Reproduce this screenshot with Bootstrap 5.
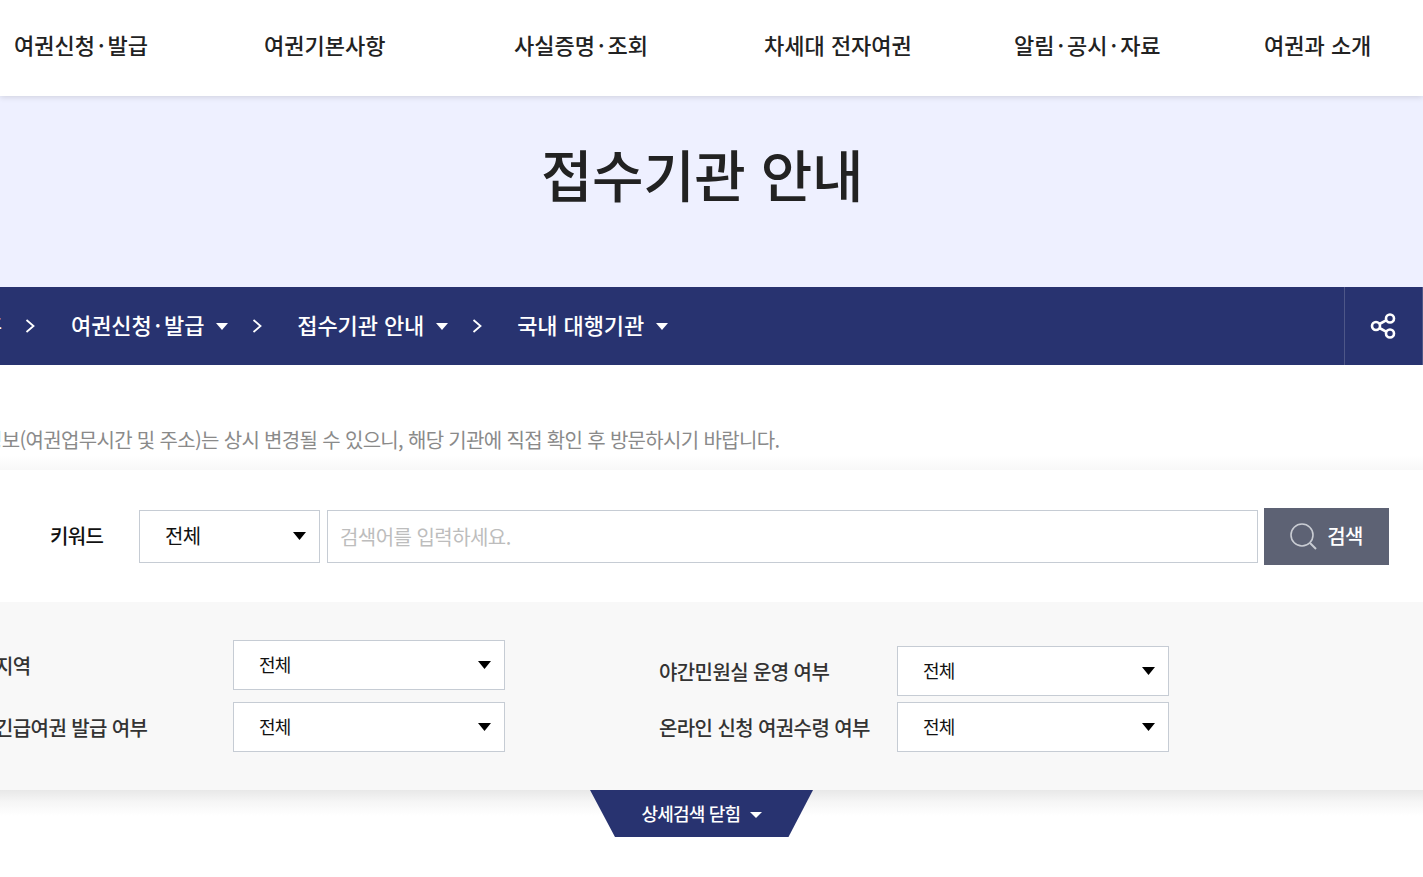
<!DOCTYPE html>
<html lang="ko">
<head>
<meta charset="utf-8">
<title>접수기관 안내</title>
<link href="https://cdn.jsdelivr.net/npm/bootstrap@5.3.0/dist/css/bootstrap.min.css" rel="stylesheet">
<style>
html,body{height:100%;overflow:hidden}
body{font-family:"Noto Sans CJK KR","Noto Sans",sans-serif;background:#fff;color:#222;width:1423px}
.top-nav{height:96px;background:#fff;box-shadow:0 1px 6px rgba(0,0,0,.14);position:relative;z-index:2;padding-left:14px}
.top-link{flex:none;width:250px;font-size:22px;font-weight:500;color:#222;text-decoration:none;white-space:nowrap;line-height:96px;margin-top:-9px}
.mid-dot{padding:0 3px}
.hero{height:191px;background:#eef0ff;padding:41px 19px 0 0}
.hero-title{font-size:56px;font-weight:500;letter-spacing:-.4px;line-height:72px;margin:0;color:#222;text-align:center}
.crumbs{height:78px;background:#283370;color:#fff}
.crumb-home{font-size:21px;font-weight:500;width:2px;overflow:hidden;white-space:nowrap;direction:rtl}
.crumb-link{color:#fff;text-decoration:none;font-size:22px;font-weight:500;letter-spacing:-.1px;white-space:nowrap;margin-left:34px;margin-top:-3px}
.crumb-link-first{margin-left:35px}
.crumb-caret{width:0;height:0;border-left:6.5px solid transparent;border-right:6.5px solid transparent;border-top:7px solid #fff;display:inline-block}
.chev-first{margin-left:23px}
.chev-next{margin-left:24px}
.share-box{width:79px;height:78px;padding-right:2px;border-left:1px solid #4e5788;border-right:1px solid #4e5788;margin-left:auto}
.notice-wrap{height:105px;padding-top:60px;background:linear-gradient(to bottom,#fff 0,#fff 91px,#f8f8f8 100%);overflow:hidden}
.notice{font-size:20px;color:#8a8a8a;letter-spacing:-.67px;line-height:30px;margin:0 0 0 -16px;white-space:nowrap}
.kw-row{height:132px;background:#fff}
.kw-label{width:139px;padding-left:50px;font-size:20px;font-weight:500;letter-spacing:-.6px;color:#111}
.sel{appearance:none;-webkit-appearance:none;background:#fff url("data:image/svg+xml,%3Csvg xmlns='http://www.w3.org/2000/svg' width='13' height='8'%3E%3Cpath d='M0 0h13L6.5 8z' fill='%23000'/%3E%3C/svg%3E") no-repeat right 13px center;border:1px solid #c6ccd4;border-radius:0;color:#111;font-family:inherit;padding:0 0 2px 25px;outline:0}
.sel-kw{width:181px;height:53px;font-size:20px;letter-spacing:-.6px;padding-bottom:0}
.kw-input{width:931px;height:53px;margin-left:7px;border:1px solid #c6ccd4;border-radius:0;padding:0 12px;font-size:20px;letter-spacing:-.55px;font-family:inherit;outline:0}
.kw-input::placeholder{color:#bdbdbd;opacity:1}
.kw-btn{width:125px;height:57px;margin-left:6px;background:#5d6274;color:#fff;border:0;border-radius:0;font-size:20px;font-weight:500;letter-spacing:-.6px;gap:10px}
.detail{height:188px;background:#f8f8f8}
.d-col{height:100%}
.d-left{width:664px;padding-top:38px;margin-left:-5px;flex:none}
.d-right{padding-top:44px;flex:none}
.d-label{font-size:20px;font-weight:500;letter-spacing:-.6px;color:#333;white-space:nowrap;width:238px;margin-top:1px}
.sel-d{width:272px;height:50px;font-size:18px;letter-spacing:-.9px}
.d-gap-1{margin-bottom:12px}
.d-gap-2{margin-bottom:6px}
.tab-wrap{height:47px;background:linear-gradient(to bottom,#e8e8e8 0,#f6f6f6 12px,#fff 26px)}
.tab-more{width:223px;height:47px;margin-left:590px;background:#283370;color:#fff;clip-path:polygon(0 0,100% 0,89% 100%,25px 100%);font-size:18px;font-weight:500;letter-spacing:-.8px;border:0;padding:0}
.tab-more .crumb-caret{border-top-width:6px;margin-left:5px;vertical-align:3px}
</style>
</head>
<body>
<nav class="top-nav d-flex align-items-center">
  <a class="top-link" href="#">여권신청<span class="mid-dot">·</span>발급</a>
  <a class="top-link" href="#">여권기본사항</a>
  <a class="top-link" href="#">사실증명<span class="mid-dot">·</span>조회</a>
  <a class="top-link" href="#">차세대 전자여권</a>
  <a class="top-link" href="#">알림<span class="mid-dot">·</span>공시<span class="mid-dot">·</span>자료</a>
  <a class="top-link" href="#">여권과 소개</a>
</nav>
<header class="hero"><h1 class="hero-title">접수기관 안내</h1></header>
<div class="crumbs d-flex align-items-center">
  <span class="crumb-home">홈</span>
  <svg class="chev-first" width="11" height="16" viewBox="0 0 11 16"><path d="M1.5 2l7 6-7 6" fill="none" stroke="#fff" stroke-width="1.8"/></svg>
  <a class="crumb-link crumb-link-first me-2" href="#">여권신청<span class="mid-dot">·</span>발급</a>
  <span class="crumb-caret ms-1"></span>
  <svg class="chev-next" width="11" height="16" viewBox="0 0 11 16"><path d="M1.5 2l7 6-7 6" fill="none" stroke="#fff" stroke-width="1.8"/></svg>
  <a class="crumb-link me-2" href="#">접수기관 안내</a>
  <span class="crumb-caret ms-1"></span>
  <svg class="chev-next" width="11" height="16" viewBox="0 0 11 16"><path d="M1.5 2l7 6-7 6" fill="none" stroke="#fff" stroke-width="1.8"/></svg>
  <a class="crumb-link me-2" href="#">국내 대행기관</a>
  <span class="crumb-caret ms-1"></span>
  <div class="share-box d-flex align-items-center justify-content-center">
    <svg width="26" height="26" viewBox="0 0 26 26" fill="none" stroke="#fff" stroke-width="2.6"><circle cx="6" cy="13" r="4"/><circle cx="20" cy="5.5" r="4"/><circle cx="20" cy="20.5" r="4"/><path d="M9.5 11l7-3.8M9.5 15l7 3.8"/></svg>
  </div>
</div>
<div class="notice-wrap"><p class="notice">정보(여권업무시간 및 주소)는 상시 변경될 수 있으니, 해당 기관에 직접 확인 후 방문하시기 바랍니다.</p></div>
<form class="kw-row d-flex align-items-center">
  <label class="kw-label" for="kw-type">키워드</label>
  <select id="kw-type" class="sel sel-kw"><option>전체</option></select>
  <input class="kw-input" type="text" placeholder="검색어를 입력하세요.">
  <button class="kw-btn btn d-flex align-items-center justify-content-center" type="button">
    <svg width="27" height="27" viewBox="0 0 27 27" fill="none" stroke="#c9ccd3" stroke-width="1.6"><circle cx="12" cy="12" r="11"/><path d="M20 20l6 6" stroke-width="2"/></svg>
    <span>검색</span>
  </button>
</form>
<section class="detail d-flex">
  <div class="d-col d-left">
    <div class="d-flex align-items-center d-gap-1"><span class="d-label">지역</span><select class="sel sel-d" aria-label="지역"><option>전체</option></select></div>
    <div class="d-flex align-items-center"><span class="d-label">긴급여권 발급 여부</span><select class="sel sel-d" aria-label="긴급여권 발급 여부"><option>전체</option></select></div>
  </div>
  <div class="d-col d-right">
    <div class="d-flex align-items-center d-gap-2"><span class="d-label">야간민원실 운영 여부</span><select class="sel sel-d" aria-label="야간민원실 운영 여부"><option>전체</option></select></div>
    <div class="d-flex align-items-center"><span class="d-label">온라인 신청 여권수령 여부</span><select class="sel sel-d" aria-label="온라인 신청 여권수령 여부"><option>전체</option></select></div>
  </div>
</section>
<div class="tab-wrap"><button class="tab-more" type="button">상세검색 닫힘 <span class="crumb-caret"></span></button></div>
<script src="https://cdn.jsdelivr.net/npm/bootstrap@5.3.0/dist/js/bootstrap.bundle.min.js"></script>
</body>
</html>
